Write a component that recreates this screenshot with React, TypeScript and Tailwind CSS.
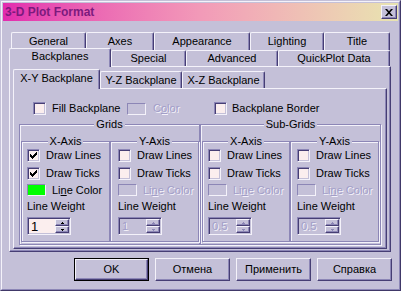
import React from "react";

const Check = () => (
  <svg width="7" height="7" viewBox="0 0 7 7" className="block">
    <path d="M0 2h1v1h1v1h1v-1h1v-1h1v-1h1v-1h1v3h-1v1h-1v1h-1v1h-1v1h-1v-1h-1v-1h-1z" fill="#000" />
  </svg>
);

function CheckBox({ checked }: { checked?: boolean }) {
  return (
    <div className="w-[13px] h-[13px] shrink-0 border border-t-[#8c86b6] border-l-[#8c86b6] border-r-[#f4f2fa] border-b-[#f4f2fa] shadow-[inset_1px_1px_0_#463e74,inset_-1px_-1px_0_#c4c0d8] bg-[#fbeeee] flex items-center justify-center">
      {checked && <Check />}
    </div>
  );
}

function Tab({
  w,
  h,
  label,
  selected,
  pb = 0,
}: {
  w: number;
  h: number;
  label: string;
  selected?: boolean;
  pb?: number;
}) {
  return (
    <div
      style={{ width: w, height: h, paddingBottom: pb }}
      className={
        "shrink-0 flex items-center justify-center border-l border-t border-r border-l-[#f4f2fa] border-t-[#f4f2fa] border-r-[#463e74] rounded-tl-[2px] rounded-tr-[2px] shadow-[inset_-1px_0_0_#8c86b6] bg-[#c4c0d8] leading-[13px] " +
        (selected ? "relative z-10 -mb-px" : "")
      }
    >
      {label}
    </div>
  );
}

function Disabled({ children }: { children: React.ReactNode }) {
  return <span className="text-[#a29ec8] [text-shadow:1px_1px_0_#f4f2fa]">{children}</span>;
}

function Spinner({ value, disabled }: { value: string; disabled?: boolean }) {
  const fill = disabled ? "#8c86b6" : "#000";
  return (
    <div className="w-[44px] h-[18px] flex border border-t-[#8c86b6] border-l-[#8c86b6] border-r-[#f4f2fa] border-b-[#f4f2fa] shadow-[inset_1px_1px_0_#463e74,inset_-1px_-1px_0_#c4c0d8] p-[1px]">
      <div
        className={
          "flex-1 flex items-center pl-[2px] leading-[13px] " +
          (disabled ? "bg-[#c4c0d8]" : "bg-[#fbeeee]")
        }
      >
        {disabled ? <Disabled>{value}</Disabled> : <span className="text-[13px]">{value}</span>}
      </div>
      <div className="w-[14px] flex flex-col">
        {[0, 1].map((i) => (
          <div
            key={i}
            className="flex-1 flex items-center justify-center border-t border-l border-t-[#f4f2fa] border-l-[#f4f2fa] border-r border-b border-r-[#463e74] border-b-[#463e74] shadow-[inset_-1px_-1px_0_#8c86b6]"
          >
            <svg width="3" height="2" viewBox="0 0 3 2" className="block">
              {i === 0 ? (
                <path d="M1 0h1v1h1v1h-3v-1h1z" fill={fill} />
              ) : (
                <path d="M0 0h3v1h-1v1h-1v-1h-1z" fill={fill} />
              )}
            </svg>
          </div>
        ))}
      </div>
    </div>
  );
}

function Swatch({ color }: { color?: string }) {
  return (
    <div
      className="w-[19px] h-[12px] shrink-0 border border-t-[#8c86b6] border-l-[#8c86b6] border-r-[#f4f2fa] border-b-[#f4f2fa]"
      style={{ background: color ?? "#c4c0d8" }}
    />
  );
}

function AxisBox({
  title,
  w,
  pl,
  active,
  weight,
}: {
  title: string;
  w: number;
  pl: number;
  active: boolean;
  weight: string;
}) {
  return (
    <div
      style={{ width: w, paddingLeft: pl }}
      className="h-[101px] shrink-0 border border-[#8c86b6] shadow-[inset_1px_1px_0_#f4f2fa,1px_1px_0_#f4f2fa] flex flex-col"
    >
      <div className="-mt-[7px] self-center h-[13px] leading-[13px] px-[2px] bg-[#c4c0d8]" style={{ marginLeft: -pl }}>
        {title}
      </div>
      <div className="mt-[1px] flex items-center gap-[6px] h-[13px] leading-[13px]">
        <CheckBox checked={active} />
        <span>Draw Lines</span>
      </div>
      <div className="mt-[5px] flex items-center gap-[6px] h-[13px] leading-[13px]">
        <CheckBox checked={active} />
        <span>Draw Ticks</span>
      </div>
      <div className="mt-[4px] flex items-center gap-[6px] h-[12px] leading-[13px]">
        <Swatch color={active ? "#00ff00" : undefined} />
        {active ? (
          <span>
            Li<span className="underline">n</span>e Color
          </span>
        ) : (
          <Disabled>
            Li<span className="underline">n</span>e Color
          </Disabled>
        )}
      </div>
      <div className="mt-[4px] h-[13px] leading-[13px]">Line Weight</div>
      <div className="mt-[4px]">
        <Spinner value={weight} disabled={!active} />
      </div>
    </div>
  );
}

function Group({
  title,
  children,
}: {
  title: string;
  children: React.ReactNode;
}) {
  return (
    <div className="w-[181px] h-[121px] shrink-0 border border-[#8c86b6] shadow-[inset_1px_1px_0_#f4f2fa,1px_1px_0_#f4f2fa] flex flex-col">
      <div className="-mt-[7px] self-center h-[13px] leading-[13px] px-[2px] bg-[#c4c0d8]">{title}</div>
      <div className="mt-[10px] pl-[1px] flex">{children}</div>
    </div>
  );
}

function Button({ label, def }: { label: string; def?: boolean }) {
  return (
    <div className={"w-[75px] h-[23px] shrink-0 " + (def ? "border border-black" : "")}>
      <div className="w-full h-full flex items-center justify-center border-t border-l border-t-[#f4f2fa] border-l-[#f4f2fa] border-r border-b border-r-[#463e74] border-b-[#463e74] shadow-[inset_-1px_-1px_0_#8c86b6] leading-[13px]">
        {label}
      </div>
    </div>
  );
}

export default function App() {
  return (
    <div className="w-[401px] h-[291px] bg-[#c4c0d8] border border-t-[#c4c0d8] border-l-[#c4c0d8] border-r-[#403868] border-b-[#403868] font-['Liberation_Sans',Arial,sans-serif] text-[11px] text-black select-none">
      <div className="w-full h-full border border-t-[#f4f2fa] border-l-[#f4f2fa] border-r-[#8c86b6] border-b-[#8c86b6] flex flex-col">
        {/* Title bar */}
        <div className="mt-px mx-px h-[18px] flex items-center bg-gradient-to-r from-[#e22aae] via-[#f29ab8] to-[#e8e4b0] pl-[2px] pr-[1px]">
          <span className="font-bold text-[12px] text-[#7c1a7e] leading-[14px] flex-1">3-D Plot Format</span>
          <div className="w-[16px] h-[14px] flex items-center justify-center border-t border-l border-t-[#f4f2fa] border-l-[#f4f2fa] border-r border-b border-r-[#463e74] border-b-[#463e74] shadow-[inset_-1px_-1px_0_#8c86b6] bg-[#c4c0d8]">
            <svg width="8" height="7" viewBox="0 0 8 7" className="block">
              <path d="M0 0h2l2 2.2 2-2.2h2l-3 3.5 3 3.5h-2l-2-2.2-2 2.2h-2l3-3.5z" fill="#000" />
            </svg>
          </div>
        </div>

        {/* Tabs */}
        <div className="mt-[11px] pl-[7px]">
          <div className="pl-[2px] h-[18px] flex items-end">
            <Tab w={75} h={18} label="General" />
            <Tab w={68} h={18} label="Axes" />
            <Tab w={96} h={18} label="Appearance" />
            <Tab w={74} h={18} label="Lighting" />
            <Tab w={66} h={18} label="Title" />
          </div>
          <div className="h-[16px] flex items-end">
            <Tab w={102} h={19} label="Backplanes" selected pb={3} />
            <Tab w={75} h={16} label="Special" />
            <Tab w={92} h={16} label="Advanced" />
            <Tab w={112} h={16} label="QuickPlot Data" />
          </div>

          {/* Outer panel */}
          <div className="w-[382px] h-[186px] border-t border-l border-t-[#f4f2fa] border-l-[#f4f2fa] border-r border-b border-r-[#463e74] border-b-[#463e74] shadow-[inset_-1px_-1px_0_#8c86b6] pl-[3px]">
            <div className="mt-[4px] h-[17px] flex items-end">
              <Tab w={87} h={20} label="X-Y Backplane" selected pb={2} />
              <Tab w={82} h={17} label="Y-Z Backplane" />
              <Tab w={83} h={17} label="X-Z Backplane" />
            </div>
            {/* Inner panel */}
            <div className="w-[374px] h-[161px] border-t border-l border-t-[#f4f2fa] border-l-[#f4f2fa] border-r border-b border-r-[#463e74] border-b-[#463e74] shadow-[inset_-1px_-1px_0_#8c86b6]">
              <div className="mt-[13px] ml-[19px] flex items-center h-[13px] leading-[13px]">
                <div className="w-[94px] flex items-center gap-[6px]">
                  <CheckBox />
                  <span>Fill Backplane</span>
                </div>
                <div className="w-[87px] flex items-center gap-[7px]">
                  <Swatch />
                  <Disabled>
                    C<span className="underline">o</span>lor
                  </Disabled>
                </div>
                <div className="flex items-center gap-[5px]">
                  <CheckBox />
                  <span>Backplane Border</span>
                </div>
              </div>
              <div className="mt-[9px] ml-[5px] flex">
                <Group title="Grids">
                  <AxisBox title="X-Axis" w={89} pl={5} active weight="1" />
                  <AxisBox title="Y-Axis" w={89} pl={7} active={false} weight="1" />
                </Group>
                <Group title="Sub-Grids">
                  <AxisBox title="X-Axis" w={88} pl={5} active={false} weight="0.5" />
                  <AxisBox title="Y-Axis" w={89} pl={6} active={false} weight="0.5" />
                </Group>
              </div>
            </div>
          </div>
        </div>

        {/* Buttons */}
        <div className="mt-[6px] pl-[72px] flex gap-[6px]">
          <Button label="OK" def />
          <Button label="Отмена" />
          <Button label="Применить" />
          <Button label="Справка" />
        </div>
      </div>
    </div>
  );
}
